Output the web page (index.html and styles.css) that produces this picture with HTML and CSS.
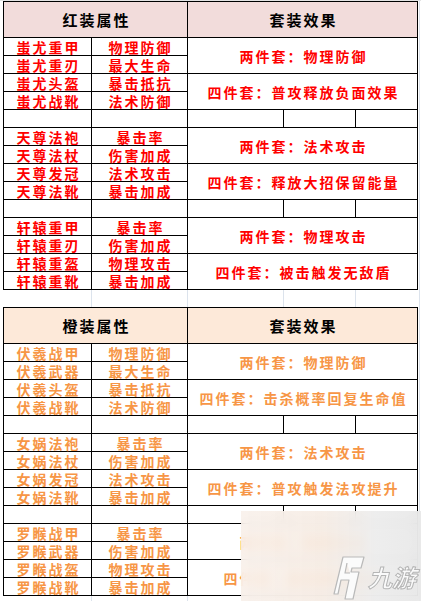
FILE: index.html
```html
<!DOCTYPE html>
<html lang="zh">
<head>
<meta charset="utf-8">
<title>装备套装</title>
<link rel="stylesheet" href="styles.css">
</head>
<body>
<div class="page">
  <div class="sheet red">
    <div class="c hl">红装属性</div><div class="c hr">套装效果</div>

    <div class="c">蚩尤重甲</div><div class="c">物理防御</div><div class="c e">两件套：物理防御</div>
    <div class="c">蚩尤重刃</div><div class="c">最大生命</div>
    <div class="c">蚩尤头盔</div><div class="c">暴击抵抗</div><div class="c e">四件套：普攻释放负面效果</div>
    <div class="c">蚩尤战靴</div><div class="c">法术防御</div>
    <div class="c"></div><div class="c"></div><div class="c"></div><div class="c"></div><div class="c"></div>

    <div class="c">天尊法袍</div><div class="c">暴击率</div><div class="c e">两件套：法术攻击</div>
    <div class="c">天尊法杖</div><div class="c">伤害加成</div>
    <div class="c">天尊发冠</div><div class="c">法术攻击</div><div class="c e">四件套：释放大招保留能量</div>
    <div class="c">天尊法靴</div><div class="c">暴击加成</div>
    <div class="c"></div><div class="c"></div><div class="c"></div><div class="c"></div><div class="c"></div>

    <div class="c">轩辕重甲</div><div class="c">暴击率</div><div class="c e">两件套：物理攻击</div>
    <div class="c">轩辕重刃</div><div class="c">伤害加成</div>
    <div class="c">轩辕重盔</div><div class="c">物理攻击</div><div class="c e">四件套：被击触发无敌盾</div>
    <div class="c">轩辕重靴</div><div class="c">暴击加成</div>
  </div>

  <div class="gap"></div>

  <div class="sheet orange">
    <div class="c hl">橙装属性</div><div class="c hr">套装效果</div>

    <div class="c">伏羲战甲</div><div class="c">物理防御</div><div class="c e">两件套：物理防御</div>
    <div class="c">伏羲武器</div><div class="c">最大生命</div>
    <div class="c">伏羲头盔</div><div class="c">暴击抵抗</div><div class="c e">四件套：击杀概率回复生命值</div>
    <div class="c">伏羲战靴</div><div class="c">法术防御</div>
    <div class="c"></div><div class="c"></div><div class="c"></div><div class="c"></div><div class="c"></div>

    <div class="c">女娲法袍</div><div class="c">暴击率</div><div class="c e">两件套：法术攻击</div>
    <div class="c">女娲法杖</div><div class="c">伤害加成</div>
    <div class="c">女娲发冠</div><div class="c">法术攻击</div><div class="c e">四件套：普攻触发法攻提升</div>
    <div class="c">女娲法靴</div><div class="c">暴击加成</div>
    <div class="c"></div><div class="c"></div><div class="c"></div><div class="c"></div><div class="c"></div>

    <div class="c">罗睺战甲</div><div class="c">暴击率</div><div class="c e">两件套：物理攻击</div>
    <div class="c">罗睺武器</div><div class="c">伤害加成</div>
    <div class="c">罗睺战盔</div><div class="c">物理攻击</div><div class="c e">四件套：暴击降低防御</div>
    <div class="c">罗睺战靴</div><div class="c">暴击加成</div>
  </div>

  <div class="watermark">
    <svg class="wm-logo" width="34" height="46" viewBox="0 0 34 46">
      <path d="M11 2 L32 2 L29 13 L20 13 L19 17 L27 17 L21 44 L13 44 L17 25 L9 25 L6 39 L2 39 Z M15 8 L13 18 L18 18" fill="#fbfbfb" stroke="#b9b9b9" stroke-width="1.2" stroke-linejoin="round"/>
    </svg>
    <span class="wm-text">九游</span>
  </div>
</div>
</body>
</html>
```

FILE: styles.css
```css
html, body {
  margin: 0;
  padding: 0;
  background: #ffffff;
}

body {
  width: 421px;
  height: 601px;
  overflow: hidden;
  background-color: #ffffff;
  background-image:
    linear-gradient(#dce3ec, #dce3ec),
    linear-gradient(#dce3ec, #dce3ec),
    linear-gradient(#dce3ec, #dce3ec),
    linear-gradient(#dce3ec, #dce3ec),
    linear-gradient(#dce3ec, #dce3ec),
    linear-gradient(#e3e3e3, #e3e3e3);
  background-size: 1px 100%, 1px 100%, 1px 100%, 1px 100%, 1px 100%, 100% 1px;
  background-position: 91px 0, 187px 0, 283px 0, 355px 0, 419px 0, 0 0;
  background-repeat: no-repeat;
}

.page {
  position: relative;
  padding-top: 1px;
  padding-left: 3px;
}

.sheet {
  display: grid;
  grid-template-columns: 88px 96px 96px 72px 62px;
  grid-template-rows: 36px;
  grid-auto-rows: 18px;
  width: 415px;
  box-sizing: border-box;
  border-left: 1px solid #000;
  border-top: 1px solid #000;
  background: #ffffff;
  font-family: "Noto Sans CJK SC", "Noto Sans", sans-serif;
  font-weight: 700;
  font-size: 14px;
  letter-spacing: 2px;
}

.c {
  box-sizing: border-box;
  border-right: 1px solid #000;
  border-bottom: 1px solid #000;
  display: flex;
  align-items: center;
  justify-content: center;
  padding-left: 2px;
  line-height: 1;
  white-space: nowrap;
}

.hl {
  grid-column: span 2;
  font-size: 15px;
  color: #000;
}

.hr {
  grid-column: span 3;
  font-size: 15px;
  color: #000;
}

.e {
  grid-column: span 3;
  grid-row: span 2;
}

.red .c { color: #ff0000; }
.red .hl, .red .hr { background: #f2dcdb; color: #000; }

.orange .c { color: #f79646; }
.orange .hl, .orange .hr { background: #fde9d9; color: #000; }

.gap {
  height: 17px;
}

.watermark {
  position: absolute;
  left: 241px;
  top: 511px;
  width: 180px;
  height: 90px;
  background: linear-gradient(90deg, rgba(248, 240, 234, 0.88) 0%, rgba(246, 236, 228, 0.9) 45%, rgba(236, 236, 236, 0.92) 75%, rgba(232, 232, 232, 0.92) 100%);
  backdrop-filter: blur(6px);
  -webkit-backdrop-filter: blur(6px);
}

.wm-logo {
  position: absolute;
  left: 91px;
  top: 44px;
}

.wm-text {
  position: absolute;
  left: 127px;
  top: 54px;
  font-family: "Noto Sans CJK SC", sans-serif;
  font-size: 24px;
  font-weight: 700;
  font-style: italic;
  line-height: 1;
  color: #fafafa;
  -webkit-text-stroke: 1px #b5b5b5;
  letter-spacing: 0;
}
```
